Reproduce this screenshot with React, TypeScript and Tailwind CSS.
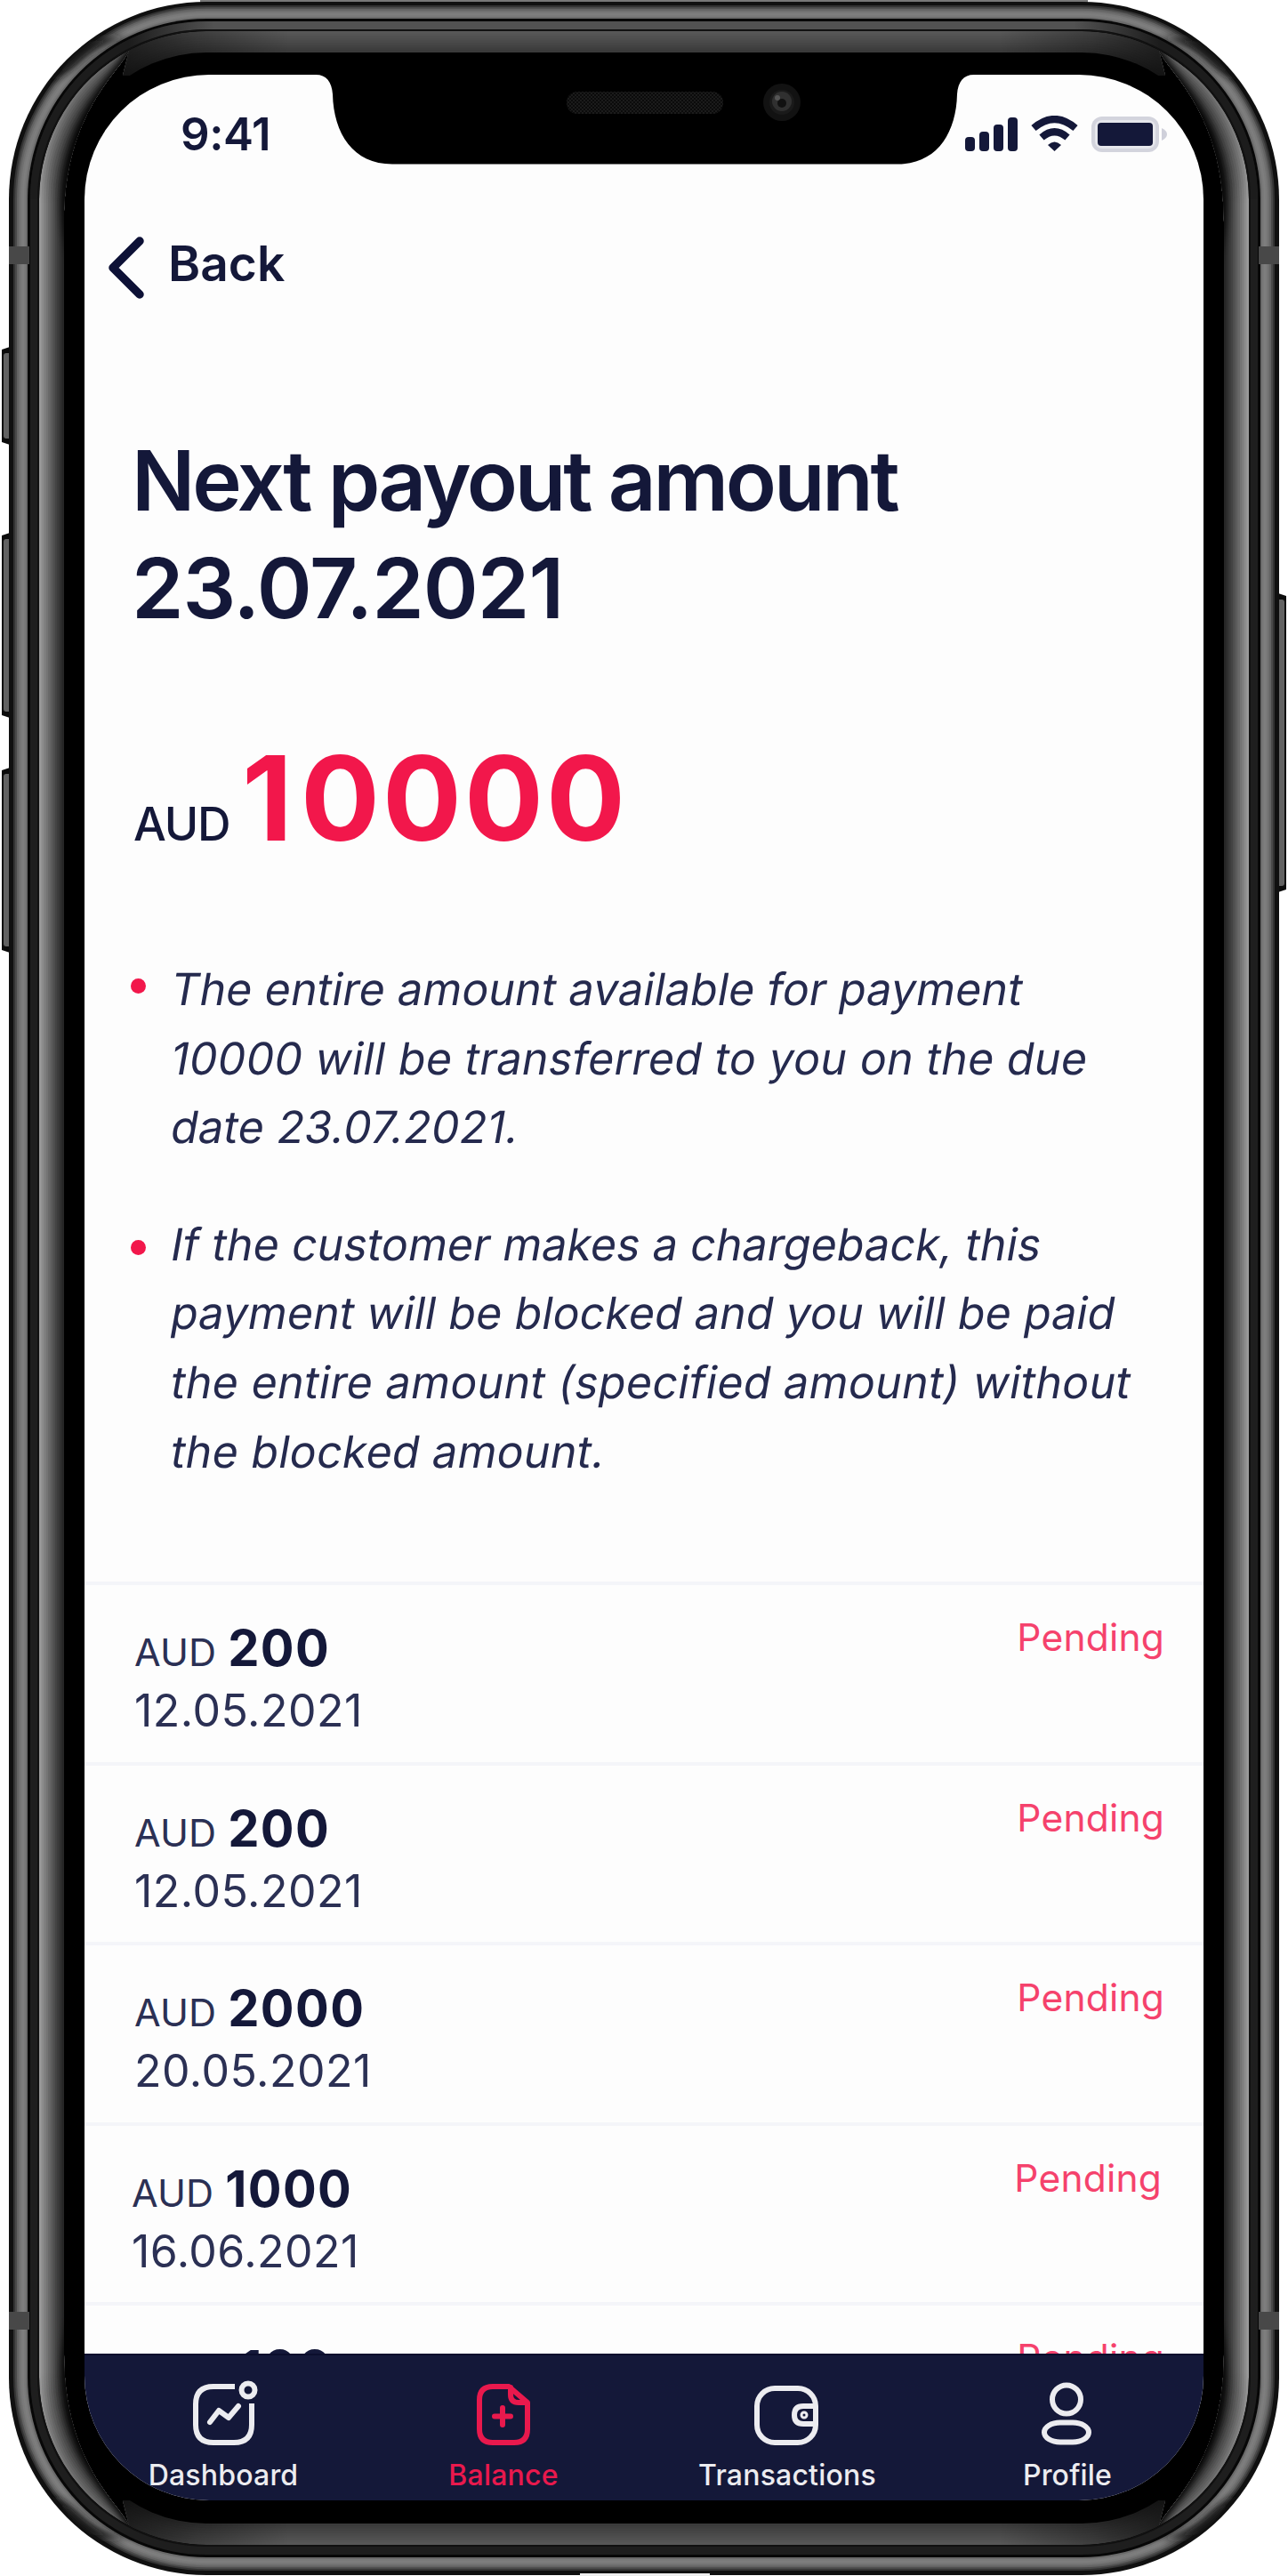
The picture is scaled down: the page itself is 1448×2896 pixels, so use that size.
import React from "react";

const NAVY = "#141839";

type Step = { dx: number; dy: number; color: string };

const RAIL_RAMP = ["#333333", "#4a4a4a", "#636363", "#707070", "#7a7a7a", "#7e7e7e", "#7a7a7a", "#6a6a6a"];
const SIDE_RAMP = ["#9a9a9a", "#8c8c8c", "#808080", "#747474", "#686868", "#5c5c5c", "#505050", "#444444", "#3a3a3a", "#303030", "#262626"];
const TOP_RAMP = ["#575757", "#545454", "#505050", "#4d4d4d", "#4a4a4a", "#464646", "#424242", "#3e3e3e", "#3a3a3a"];

function ramp(x0: number, x1: number, y0: number, y1: number, colors: string[]): Step[] {
  return colors.map((color, i) => ({
    dx: x0 + ((x1 - x0) * i) / colors.length,
    dy: y0 + ((y1 - y0) * i) / colors.length,
    color,
  }));
}

function Ring({ dx, dy, color }: Step) {
  return (
    <rect x={dx} y={dy} width={1448 - 2 * dx} height={2896 - 2 * dy} rx={232 - dx} ry={224 - dy} fill={color} />
  );
}

const SIDE_LEFT =
  "M44 240 V224 A188 189 0 0 1 145 57 C136 80 72 125 72 250 V2646 C72 2771 136 2816 145 2839 A188 189 0 0 1 44 2672 Z";
const EDGE_TOP = "M150 52 C140 84 78 125 76 225 C76 255 80 275 88 300";
const RAIL_SHADE = "M143 42 C120 40 102 42 90 50 L55 90 C70 86 82 78 92 68 C106 56 122 47 143 42 Z";

const CORNERS = [
  undefined,
  "translate(1448 0) scale(-1 1)",
  "translate(0 2896) scale(1 -1)",
  "translate(1448 2896) scale(-1 -1)",
];

function SideButton({ x, y, h, flip }: { x: number; y: number; h: number; flip?: boolean }) {
  return (
    <g transform={flip ? "translate(1448 0) scale(-1 1)" : undefined}>
      <path d={`M${x + 12} ${y} L${x} ${y + 4} V${y + h - 4} L${x + 12} ${y + h} Z`} fill="#0c0c0c" />
      <rect x={x + 2} y={y + 8} width="9" height={h - 16} rx="3" fill="#626262" />
    </g>
  );
}

function DeviceShell() {
  return (
    <svg className="absolute inset-0" width="1448" height="2896" viewBox="0 0 1448 2896" aria-hidden="true">
      <defs>
        <clipPath id="sides">
          <path d={SIDE_LEFT} />
          <path d={SIDE_LEFT} transform="translate(1448 0) scale(-1 1)" />
        </clipPath>
        <clipPath id="outer">
          <rect x="12" y="4" width="1424" height="2888" rx="220" />
        </clipPath>
        <clipPath id="inner">
          <rect x="44" y="35" width="1360" height="2826" rx="188" ry="189" />
        </clipPath>
        <clipPath id="caps">
          <path d="M145 57 V0 H1303 V57 L1310 85 H138 Z" />
          <path d="M145 2839 V2896 H1303 V2839 L1310 2811 H138 Z" />
        </clipPath>
        <linearGradient id="capFade" x1="138" x2="1310" y1="0" y2="0" gradientUnits="userSpaceOnUse">
          <stop offset="0" stopColor="#000" stopOpacity="0.7" />
          <stop offset="0.07" stopColor="#000" stopOpacity="0.3" />
          <stop offset="0.16" stopColor="#000" stopOpacity="0" />
          <stop offset="0.84" stopColor="#000" stopOpacity="0" />
          <stop offset="0.93" stopColor="#000" stopOpacity="0.3" />
          <stop offset="1" stopColor="#000" stopOpacity="0.7" />
        </linearGradient>
        <linearGradient id="tipFade" x1="0" x2="0" y1="50" y2="230" gradientUnits="userSpaceOnUse">
          <stop offset="0" stopColor="#000" stopOpacity="0.4" />
          <stop offset="1" stopColor="#000" stopOpacity="0" />
        </linearGradient>
        <linearGradient id="lip" x1="34" x2="1414" y1="0" y2="0" gradientUnits="userSpaceOnUse">
          <stop offset="0" stopColor="#1c1c1c" />
          <stop offset="0.08" stopColor="#1c1c1c" />
          <stop offset="0.15" stopColor="#525252" />
          <stop offset="0.85" stopColor="#525252" />
          <stop offset="0.92" stopColor="#1c1c1c" />
          <stop offset="1" stopColor="#1c1c1c" />
        </linearGradient>
        <filter id="soft" x="-50%" y="-50%" width="200%" height="200%">
          <feGaussianBlur stdDeviation="4" />
        </filter>
        <pattern id="mesh" width="4" height="4" patternUnits="userSpaceOnUse">
          <rect width="4" height="4" fill="#0b0b0b" />
          <rect width="2" height="2" fill="#1b1b1b" />
          <rect x="2" y="2" width="2" height="2" fill="#1b1b1b" />
        </pattern>
      </defs>

      <SideButton x={2} y={389} h={112} />
      <SideButton x={2} y={598} h={210} />
      <SideButton x={2} y={862} h={210} />
      <SideButton x={2} y={666} h={338} flip />

      <rect x="225" y="0" width="998" height="6" fill="#777777" />
      <rect x="10" y="2" width="1428" height="2893" rx="222" fill="#101010" />
      {ramp(15, 31, 6, 21, RAIL_RAMP).map((s) => (
        <Ring key={s.dx} {...s} />
      ))}
      <g clipPath="url(#outer)">
        {CORNERS.map((t, i) => (
          <path key={i} d={RAIL_SHADE} transform={t} fill="#181818" opacity="0.9" filter="url(#soft)" />
        ))}
      </g>
      <Ring dx={31} dy={21} color="#070707" />
      <Ring dx={34} dy={24} color="#1e1e1e" />
      <path
        d="M34 224 A198 200 0 0 1 232 24 H1216 A198 200 0 0 1 1414 224 L1404 224 A188 191 0 0 0 1216 33 H232 A188 191 0 0 0 44 224 Z"
        fill="url(#lip)"
      />
      <Ring dx={42} dy={33} color="#111111" />
      <Ring dx={44} dy={35} color="#000000" />
      <g clipPath="url(#inner)">
        <g clipPath="url(#caps)">
          {ramp(44, 72, 35, 59, TOP_RAMP).map((s) => (
            <Ring key={s.dx} {...s} />
          ))}
          <rect x="138" y="35" width="1172" height="2826" fill="url(#capFade)" />
          <Ring dx={72} dy={59} color="#000000" />
        </g>
      </g>
      <g clipPath="url(#sides)">
        {ramp(44, 72, 35, 59, SIDE_RAMP).map((s) => (
          <Ring key={s.dx} {...s} />
        ))}
        {CORNERS.map((t, i) => (
          <g key={i} transform={t}>
            <rect x="40" y="50" width="110" height="180" fill="url(#tipFade)" />
            <path d={EDGE_TOP} fill="none" stroke="#000" strokeWidth="12" filter="url(#soft)" />
          </g>
        ))}
      </g>
      <g fill="#484848">
        <rect x="10" y="277" width="23" height="20" />
        <rect x="1415" y="277" width="23" height="20" />
        <rect x="10" y="2599" width="23" height="20" />
        <rect x="1415" y="2599" width="23" height="20" />
      </g>
      <rect x="652" y="2893" width="146" height="3" fill="#eeeeee" />
    </svg>
  );
}

function Notch() {
  return (
    <svg className="absolute left-[260px] top-0" width="740" height="105" viewBox="355 84 740 105" aria-hidden="true">
      <path
        d="M355 82 H1095 V84 C1083 84 1077 92 1076 106 C1075 150 1053 184.500 1009 184.500 H441 C397 184.500 375 150 374 106 C373 92 367 84 355 84 Z"
        fill="#000"
      />
      <rect x="637" y="103" width="176" height="25" rx="12" fill="url(#mesh)" />
      <circle cx="879" cy="115" r="21" fill="#121212" />
      <circle cx="879" cy="115" r="14" fill="#1a1a1a" />
      <circle cx="879" cy="114" r="11" fill="#303030" />
      <circle cx="879" cy="116" r="5" fill="#111111" />
      <circle cx="874" cy="110" r="3" fill="#565656" />
    </svg>
  );
}

function StatusIcons() {
  return (
    <svg width="228" height="42" viewBox="1084 130 228 42" fill={NAVY} aria-hidden="true">
      <rect x="1085" y="154" width="11" height="16" rx="4" />
      <rect x="1101" y="148" width="11" height="22" rx="4" />
      <rect x="1117" y="140" width="11" height="30" rx="4" />
      <rect x="1133" y="132" width="11" height="38" rx="4" />
      <g fill="none" stroke={NAVY} strokeWidth="8">
        <path d="M1162 144 Q1185.500 124 1209 144" />
        <path d="M1171 154.500 Q1185.500 142 1200 154.500" />
      </g>
      <path d="M1178 163 Q1185.500 156 1193 163 L1185.500 170 Z" />
      <rect x="1227" y="131" width="76" height="40" rx="12" fill="#d3d4dd" />
      <rect x="1231" y="135" width="68" height="32" rx="8" fill="#e6e7ec" />
      <rect x="1234" y="138" width="62" height="26" rx="4" />
      <path d="M1306 144 Q1312 147 1312 151 Q1312 155 1306 158 Z" fill="#cfd0da" />
    </svg>
  );
}

const notes = [
  {
    dot: "mt-[26px]",
    lines: [
      { text: "The entire amount available for payment", spacing: "tracking-[0.15px]" },
      { text: "10000 will be transferred to you on the due", spacing: "tracking-[0.35px]" },
      { text: "date 23.07.2021.", spacing: "tracking-[0.35px]" },
    ],
  },
  {
    dot: "mt-[33px]",
    lines: [
      { text: "If the customer makes a chargeback, this", spacing: "tracking-[0.12px]" },
      { text: "payment will be blocked and you will be paid", spacing: "tracking-[0.12px]" },
      { text: "the entire amount (specified amount) without", spacing: "tracking-[0.37px]" },
      { text: "the blocked amount.", spacing: "tracking-[0.3px]" },
    ],
  },
];

const payouts = [
  { amount: "200", date: "12.05.2021", shift: "" },
  { amount: "200", date: "12.05.2021", shift: "" },
  { amount: "2000", date: "20.05.2021", shift: "" },
  { amount: "1000", date: "16.06.2021", shift: "-ml-[3px] mr-[3px]" },
  { amount: "100", date: "18.06.2021", shift: "ml-[14px]" },
];

function PayoutRow({ amount, date, shift }: (typeof payouts)[number]) {
  return (
    <li className="h-[202.5px] shrink-0 border-t-4 border-[#f4f5f9] pl-[56px] pr-[44px]">
      <div className={`flex items-start justify-between ${shift}`}>
        <div className="pt-[36px]">
          <p className="flex h-[70px] items-baseline leading-[70px]">
            <span className="text-[43px] tracking-[0.1px] text-[#2b3054]">AUD</span>
            <span className="ml-[13px] text-[56px] font-bold tracking-[1.4px]">{amount}</span>
          </p>
          <p className="text-[50px] leading-[70px] tracking-[0.5px] text-[#2b3054]">{date}</p>
        </div>
        <span className="pt-[29px] text-[42.5px] leading-[60px] tracking-[0.2px] text-[#f5426c]">Pending</span>
      </div>
    </li>
  );
}

const iconProps = {
  width: 80,
  height: 80,
  fill: "none",
  stroke: "currentColor",
  strokeWidth: 6,
  strokeLinecap: "round" as const,
  strokeLinejoin: "round" as const,
};

const DashboardIcon = () => (
  <svg {...iconProps} viewBox="211 2672 80 80">
    <path d="M264 2683 H240 Q220 2683 220 2703 V2726 Q220 2746 240 2746 H263 Q283 2746 283 2726 V2702" strokeLinecap="butt" />
    <circle cx="279" cy="2687" r="7.500" />
    <path d="M236 2723 L246 2710 L257 2718 L268 2705" />
  </svg>
);

const BalanceIcon = () => (
  <svg {...iconProps} viewBox="526 2672 80 80">
    <path d="M572 2683 H554 Q539 2683 539 2698 V2731 Q539 2746 554 2746 H578 Q593 2746 593 2731 V2701 Z" />
    <path d="M574 2684 V2692 Q574 2701 583 2701 H592" />
    <path d="M565 2707 V2726 M556 2716.500 H574" />
  </svg>
);

const TransactionsIcon = () => (
  <svg {...iconProps} viewBox="845 2672 80 80">
    <rect x="851" y="2685" width="66" height="61" rx="20" />
    <path d="M916 2705 H903 Q893 2705 893 2715 Q893 2725 903 2725 H916" />
    <circle cx="904" cy="2715" r="1.500" />
  </svg>
);

const ProfileIcon = () => (
  <svg {...iconProps} viewBox="1161 2672 80 80">
    <circle cx="1200" cy="2697.500" r="16" />
    <rect x="1175" y="2723.500" width="50" height="22" rx="18" ry="11" />
  </svg>
);

const tabs = [
  { label: "Dashboard", Icon: DashboardIcon, box: "w-[170px]", color: "text-[#ececf0]" },
  { label: "Balance", Icon: BalanceIcon, box: "ml-[169px] w-[122px]", color: "text-[#e9194d]" },
  { label: "Transactions", Icon: TransactionsIcon, box: "ml-[158px] w-[200px]", color: "text-[#ececf0]" },
  { label: "Profile", Icon: ProfileIcon, box: "ml-[164px] w-[102px]", color: "text-[#ececf0]" },
];

function TabBar() {
  return (
    <nav className="flex h-[165px] shrink-0 border-t-2 border-[#0b0e2d] bg-[#141839] pl-[71px]">
      {tabs.map(({ label, Icon, box, color }) => (
        <div key={label} className={`flex flex-col items-center pt-[24px] ${box} ${color}`}>
          <Icon />
          <span className="mt-[7px] whitespace-nowrap text-[32px] font-medium leading-[48px] tracking-[0.2px]">{label}</span>
        </div>
      ))}
    </nav>
  );
}

export default function App() {
  return (
    <div className="relative h-[2896px] w-[1448px] overflow-hidden bg-white px-[95px] pt-[84px] font-['Inter',sans-serif] text-[#141839]">
      <DeviceShell />
      <main className="relative flex h-[2727px] w-[1258px] flex-col overflow-hidden rounded-[140px] bg-[#fdfdfd]">
        <Notch />
        <header className="flex h-[132px] shrink-0 items-start justify-between pl-[108px] pr-[41px]">
          <span className="pt-[33px] text-[51px] font-semibold leading-[68px] tracking-[-0.4px]">9:41</span>
          <span className="pt-[46px]">
            <StatusIcons />
          </span>
        </header>
        <button className="flex h-[160px] shrink-0 items-start pl-[25px] text-left">
          <svg className="mt-[48px]" width="44" height="74" viewBox="0 0 44 74" fill="none" stroke="#0d1136" strokeWidth="9.5" strokeLinecap="round" strokeLinejoin="round" aria-hidden="true">
            <path d="M37 7 L7 37 L37 67" />
          </svg>
          <span className="ml-[25px] mt-[44px] text-[55px] font-semibold leading-[72px] tracking-[0px]">Back</span>
        </button>

        <section className="shrink-0 pl-[53px]">
          <h1 className="mt-[104px] text-[94px] font-semibold leading-[121px] tracking-[-1px]">
            <span className="tracking-[-3.2px]">Next payout amount</span>
            <br />
            23.07.2021
          </h1>
          <p className="mt-[95px] flex items-baseline leading-[160px]">
            <span className="w-[124px] pl-[2px] text-[52px] font-medium tracking-[-1.2px]">AUD</span>
            <span className="text-[132px] font-bold tracking-[3px] text-[#f2174b]">
              <span className="tracking-[9px]">1</span>0000
            </span>
          </p>
          <ul className="mt-[67px] text-[50px] leading-[77.600px] text-[#252a4e]">
            {notes.map((note, i) => (
              <li key={i} className={i === 0 ? "flex" : "mt-[54px] flex"}>
                <i className={`-ml-px size-[17px] rounded-full bg-[#f2174b] ${note.dot}`} />
                <p className="ml-[26px]">
                  {note.lines.map((line) => (
                    <span key={line.text} className={`block w-max origin-[0_70%] -skew-x-[10deg] whitespace-nowrap ${line.spacing}`}>
                      {line.text}
                    </span>
                  ))}
                </p>
              </li>
            ))}
          </ul>
        </section>

        <ul className="mt-[107px] flex min-h-0 flex-1 flex-col overflow-hidden">
          {payouts.map((p, i) => (
            <PayoutRow key={i} {...p} />
          ))}
        </ul>
        <TabBar />
      </main>
    </div>
  );
}
